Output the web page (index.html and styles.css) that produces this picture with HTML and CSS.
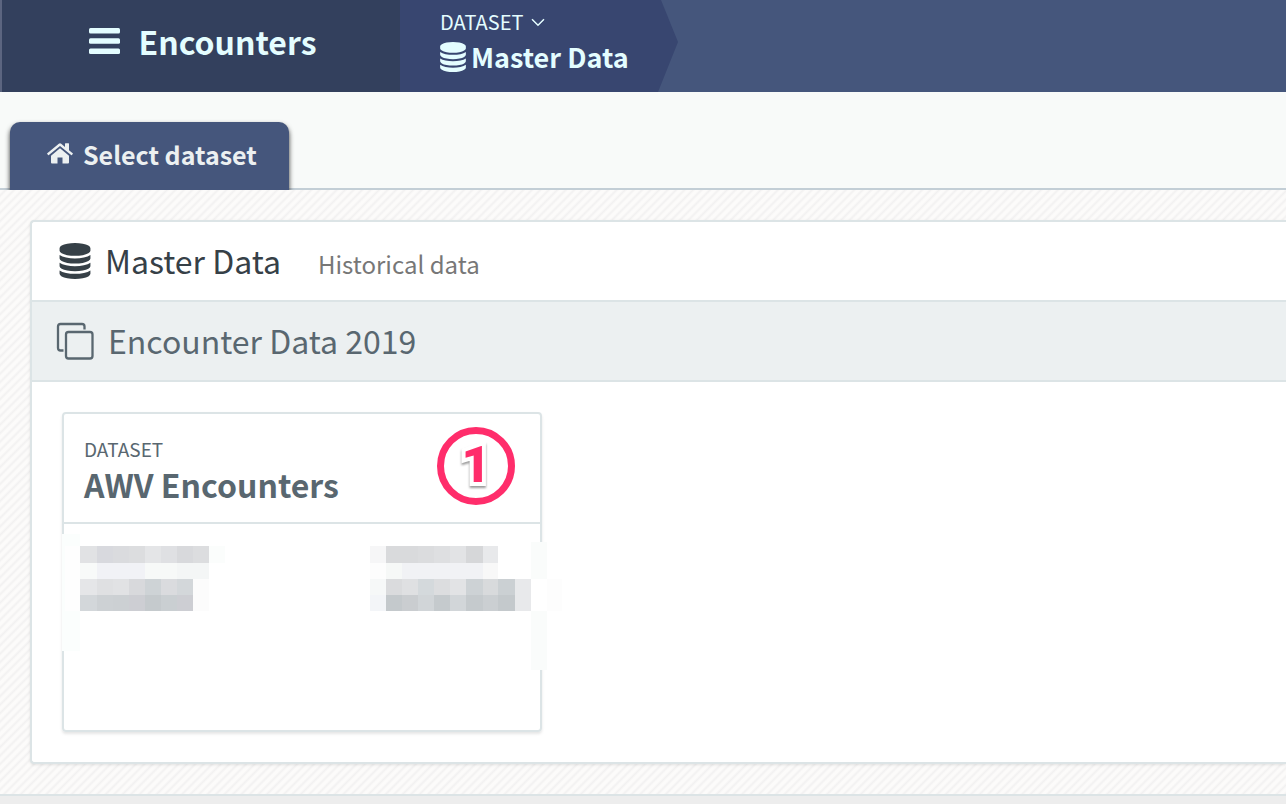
FILE: index.html
```
<!DOCTYPE html>
<html lang="en">
<head>
    <meta charset="UTF-8">
    <meta name="viewport" content="width=device-width, initial-scale=1.0">
    <title>Encounters</title>
    <link rel="stylesheet" href="styles.css">
</head>
<body>
    <svg class="symbols" aria-hidden="true">
        <symbol id="database" viewBox="0 0 1536 1792">
            <path d="M768 768q237 0 443-43t325-127v170q0 69-103 128t-280 93.500-385 34.500-385-34.500-280-93.500-103-128v-170q119 84 325 127t443 43zm0 768q237 0 443-43t325-127v170q0 69-103 128t-280 93.500-385 34.500-385-34.500-280-93.500-103-128v-170q119 84 325 127t443 43zm0-384q237 0 443-43t325-127v170q0 69-103 128t-280 93.500-385 34.500-385-34.500-280-93.500-103-128v-170q119 84 325 127t443 43zm0-1152q208 0 385 34.500t280 93.500 103 128v128q0 69-103 128t-280 93.500-385 34.500-385-34.500-280-93.500-103-128v-128q0-69 103-128t280-93.500 385-34.500z"/>
        </symbol>
    </svg>

    <header class="navbar">
        <button type="button" class="menu-button">
            <svg class="menu-icon" viewBox="0 0 32 26" aria-hidden="true">
                <rect x="0" y="0" width="31" height="5.500" rx="1.500"/>
                <rect x="0" y="10.200" width="31" height="5.500" rx="1.500"/>
                <rect x="0" y="20.500" width="31" height="5.500" rx="1.500"/>
            </svg>
            Encounters
        </button>
        <button type="button" class="crumb">
            <span class="crumb-label">DATASET
                <svg class="chevron" viewBox="0 0 14 9" aria-hidden="true"><path d="M1 1.200 7 7.200l6-6"/></svg>
            </span>
            <span class="crumb-name">
                <svg class="crumb-icon" aria-hidden="true"><use href="#database"/></svg>
                Master Data
            </span>
        </button>
    </header>

    <nav class="tabs">
        <a class="tab" href="#datasets">
            <svg class="home-icon" viewBox="0 0 26 21" aria-hidden="true">
                <path d="M13 5.300 22 12.800V19.500q0 1-1 1H15.500V14.500H10.500V20.500H5q-1 0-1-1V12.800z"/>
                <path d="M.300 10.300 11.800.700q1.200-.9 2.400 0L18 3.900V.8q0-.5.500-.5H21.500q.5 0 .5.500V7.200L25.700 10.300q.4.400 0 .8L24.900 12q-.4.400-.8.100L13 2.900 1.900 12.100q-.4.300-.8-.1L.3 11.100q-.4-.4 0-.8z"/>
            </svg>
            Select dataset
        </a>
    </nav>

    <main class="content" id="datasets">
        <section class="panel">
            <div class="panel-header">
                <svg class="panel-icon" aria-hidden="true"><use href="#database"/></svg>
                <h1>Master Data</h1>
                <span class="subtitle">Historical data</span>
            </div>
            <div class="panel-group">
                <svg class="copy-icon" viewBox="0 0 38 38" aria-hidden="true">
                    <path d="M7.500 28.500H4.500Q2 28.500 2 26V4.500Q2 2 4.500 2H26Q28.500 2 28.500 4.500V7.500"/>
                    <rect x="10" y="10" width="26.500" height="26.500" rx="2.500"/>
                </svg>
                <h2>Encounter Data 2019</h2>
            </div>
            <div class="panel-body">
                <a class="card" href="#awv">
                    <div class="card-header">
                        <div>
                            <div class="card-label">DATASET</div>
                            <div class="card-name">AWV Encounters</div>
                        </div>
                        <div class="step"><span class="step-number">1</span></div>
                    </div>
                    <div class="card-body"></div>
                    <!-- pixelated private details, runs over the card edges -->
                    <svg class="mosaic" viewBox="62 534 500 136" shape-rendering="crispEdges" aria-hidden="true">
                        <rect x="62" y="534" width="18" height="117" fill="#fbfefd"/>
                        <rect x="65" y="546" width="15" height="65" fill="#fefefe"/>
                        <rect x="531" y="542" width="16" height="128" fill="#fafcfb"/>
                        <rect x="531" y="579" width="16" height="32" fill="#fff"/>
                        <rect x="547" y="579" width="15" height="32" fill="#fdfdfd"/>

                        <rect x="80" y="546" width="17" height="17" fill="#e1e2e4"/>
                        <rect x="97" y="546" width="16" height="17" fill="#d8d9de"/>
                        <rect x="113" y="546" width="16" height="17" fill="#dadbde"/>
                        <rect x="129" y="546" width="16" height="17" fill="#dcdddf"/>
                        <rect x="145" y="546" width="16" height="17" fill="#e4e5e7"/>
                        <rect x="161" y="546" width="16" height="17" fill="#dfe0e3"/>
                        <rect x="177" y="546" width="16" height="17" fill="#d8d9dc"/>
                        <rect x="193" y="546" width="16" height="17" fill="#dcdddf"/>
                        <rect x="209" y="546" width="16" height="17" fill="#fbfdfc"/>
                        <rect x="80" y="563" width="17" height="16" fill="#f8faf9"/>
                        <rect x="97" y="563" width="48" height="16" fill="#f1f2f6"/>
                        <rect x="145" y="563" width="32" height="16" fill="#f7f9f8"/>
                        <rect x="177" y="563" width="32" height="16" fill="#f4f6f6"/>
                        <rect x="80" y="579" width="17" height="16" fill="#e5e6e8"/>
                        <rect x="97" y="579" width="16" height="16" fill="#dfe0e2"/>
                        <rect x="113" y="579" width="16" height="16" fill="#e1e2e4"/>
                        <rect x="129" y="579" width="16" height="16" fill="#d8d9dc"/>
                        <rect x="145" y="579" width="16" height="16" fill="#ced3d6"/>
                        <rect x="161" y="579" width="16" height="16" fill="#dadbde"/>
                        <rect x="177" y="579" width="16" height="16" fill="#d3d7da"/>
                        <rect x="193" y="579" width="16" height="32" fill="#fcfcfc"/>
                        <rect x="80" y="595" width="17" height="16" fill="#d3d7da"/>
                        <rect x="97" y="595" width="16" height="16" fill="#cdd1d4"/>
                        <rect x="113" y="595" width="16" height="16" fill="#ccd0d3"/>
                        <rect x="129" y="595" width="16" height="16" fill="#cdced3"/>
                        <rect x="145" y="595" width="16" height="16" fill="#c5cacd"/>
                        <rect x="161" y="595" width="16" height="16" fill="#cacfd2"/>
                        <rect x="177" y="595" width="16" height="16" fill="#cdced3"/>

                        <rect x="370" y="546" width="16" height="17" fill="#f6f6f7"/>
                        <rect x="386" y="546" width="32" height="17" fill="#d9dadc"/>
                        <rect x="418" y="546" width="16" height="17" fill="#dbdcde"/>
                        <rect x="434" y="546" width="16" height="17" fill="#dedfe1"/>
                        <rect x="450" y="546" width="16" height="17" fill="#e2e3e5"/>
                        <rect x="466" y="546" width="17" height="17" fill="#d6d7d9"/>
                        <rect x="483" y="546" width="15" height="17" fill="#e8e9eb"/>
                        <rect x="370" y="563" width="16" height="16" fill="#fdfdfd"/>
                        <rect x="386" y="563" width="16" height="16" fill="#f6f8f7"/>
                        <rect x="402" y="563" width="81" height="16" fill="#f1f2f5"/>
                        <rect x="483" y="563" width="15" height="16" fill="#f8f8f8"/>
                        <rect x="370" y="579" width="16" height="16" fill="#f6f8f8"/>
                        <rect x="386" y="579" width="16" height="16" fill="#dadbdd"/>
                        <rect x="402" y="579" width="16" height="16" fill="#dfe0e2"/>
                        <rect x="418" y="579" width="16" height="16" fill="#d4d9dc"/>
                        <rect x="434" y="579" width="16" height="16" fill="#dcdddf"/>
                        <rect x="450" y="579" width="16" height="16" fill="#e2e3e5"/>
                        <rect x="466" y="579" width="17" height="16" fill="#cdd2d5"/>
                        <rect x="483" y="579" width="15" height="16" fill="#d8dadc"/>
                        <rect x="498" y="579" width="17" height="16" fill="#cbd0d3"/>
                        <rect x="515" y="579" width="16" height="32" fill="#e8e9eb"/>
                        <rect x="370" y="595" width="16" height="16" fill="#f3f5f8"/>
                        <rect x="386" y="595" width="16" height="16" fill="#c4c9cc"/>
                        <rect x="402" y="595" width="16" height="16" fill="#cacdd0"/>
                        <rect x="418" y="595" width="16" height="16" fill="#d1d5d8"/>
                        <rect x="434" y="595" width="16" height="16" fill="#c5cacd"/>
                        <rect x="450" y="595" width="16" height="16" fill="#d2d6d9"/>
                        <rect x="466" y="595" width="17" height="16" fill="#c5cacd"/>
                        <rect x="483" y="595" width="15" height="16" fill="#cbcfd2"/>
                        <rect x="498" y="595" width="17" height="16" fill="#c4c9cc"/>
                    </svg>
                </a>
            </div>
        </section>
    </main>

    <footer class="footer"></footer>
</body>
</html>
```
FILE: styles.css
```
* {
    margin: 0;
    padding: 0;
    box-sizing: border-box;
}

body {
    font-family: 'Source Sans Pro', 'Noto Sans CJK SC', sans-serif;
    background: #f8faf9;
    color: #596770;
    display: flex;
    flex-direction: column;
    min-height: 100vh;
    overflow-x: hidden;
}

button {
    border: none;
    background: none;
    color: inherit;
    font-family: inherit;
    cursor: pointer;
}

a {
    color: inherit;
    text-decoration: none;
}

.symbols {
    display: none;
}

svg {
    fill: currentColor;
    flex-shrink: 0;
}

/* top bar */
.navbar {
    display: flex;
    height: 92px;
    background: #45567c;
    color: #e4fdff;
}

.menu-button {
    display: flex;
    justify-content: center;
    align-items: center;
    gap: 17px;
    width: 400px;
    padding: 0 0 10px 4px;
    background: #33405d;
    border-left: 2px solid #5c6580;
    font-size: 32px;
    font-weight: 700;
    line-height: 40px;
}

.menu-icon {
    width: 32px;
    height: 26px;
}

.crumb {
    display: flex;
    flex-direction: column;
    justify-content: flex-start;
    width: 278px;
    padding: 8px 40px 0;
    background: #384670;
    clip-path: polygon(0 0, 261px 0, 100% 42px, 258px 100%, 0 100%);
    text-align: left;
}

.crumb-label {
    display: flex;
    align-items: center;
    gap: 8px;
    font-size: 20px;
    line-height: 28px;
}

.chevron {
    width: 14px;
    height: 9px;
    fill: none;
    stroke: currentColor;
    stroke-width: 1.5;
}

.crumb-name {
    display: flex;
    align-items: center;
    gap: 5px;
    font-size: 27px;
    font-weight: 700;
    line-height: 42px;
    white-space: nowrap;
}

.crumb-icon {
    width: 26px;
    height: 30px;
}

/* tabs */
.tabs {
    display: flex;
    padding: 30px 10px 0;
    border-bottom: 2px solid #c3ced6;
}

.tab {
    display: flex;
    align-items: center;
    gap: 10px;
    height: 68px;
    margin-bottom: -2px;
    padding: 0 32px 5px 37px;
    background: #45567c;
    border-radius: 10px 10px 0 0;
    box-shadow: 0 3px 5px rgba(0, 0, 0, 0.8);
    clip-path: inset(-8px -8px 0 -8px);
    color: #ecf0f1;
    font-size: 25px;
    font-weight: 700;
}

.home-icon {
    width: 26px;
    height: 21px;
}

/* dataset list */
.content {
    padding: 30px 0 30px 30px;
    background: repeating-linear-gradient(135deg, #fcfbfa 0, #fcfbfa 2px, #f2f1f1 4px, #fcfbfa 6px);
}

.panel {
    background: #fff;
    border: 2px solid #dce4e6;
    border-right: none;
    border-radius: 4px 0 0 4px;
    box-shadow: 0 1px 3px rgba(0, 0, 0, 0.1);
}

.panel-header,
.panel-group {
    display: flex;
    align-items: center;
    height: 80px;
    border-bottom: 2px solid #dce4e6;
}

.panel-header {
    padding-left: 27px;
    color: #364047;
}

.panel-group {
    gap: 14px;
    padding-left: 24px;
    background: #ecf0f1;
}

.panel-icon {
    width: 32px;
    height: 36px;
    margin-right: 14px;
}

h1,
h2 {
    padding-bottom: 2px;
    font-size: 32px;
    font-weight: 400;
    line-height: 40px;
}

.subtitle {
    margin: 6px 0 0 37px;
    color: #777;
    font-size: 24px;
    line-height: 32px;
}

.copy-icon {
    width: 38px;
    height: 38px;
    fill: none;
    stroke: currentColor;
    stroke-width: 2.3;
}

.panel-body {
    padding: 30px;
}

.card {
    display: block;
    position: relative;
    width: 480px;
    border: 2px solid #dce4e6;
    border-radius: 4px;
    box-shadow: 0 2px 3px rgba(0, 0, 0, 0.1);
}

.card-header {
    display: flex;
    justify-content: space-between;
    align-items: flex-start;
    height: 110px;
    padding: 13px 25px 0 20px;
    border-bottom: 2px solid #dce4e6;
}

.card-label {
    padding-top: 8px;
    font-size: 19px;
    line-height: 28px;
}

.card-name {
    font-size: 32px;
    font-weight: 700;
    line-height: 42px;
}

.step {
    width: 78px;
    height: 78px;
    border: 7px solid #ff2d6b;
    border-radius: 50%;
    color: #ff2d6b;
    font-family: Roboto, sans-serif;
    font-size: 50px;
    font-weight: 900;
    line-height: 62px;
    text-align: center;
}

.step-number {
    -webkit-text-stroke: 8px #fff;
    paint-order: stroke fill;
    stroke-linejoin: round;
    filter: drop-shadow(0 2px 1px rgba(0, 0, 0, 0.4));
}

.card-body {
    height: 206px;
}

.mosaic {
    position: absolute;
    top: 120px;
    left: -2px;
    width: 500px;
    height: 136px;
}

.footer {
    flex: 1;
    border-top: 2px solid #dce4e6;
    background: #ededed;
}
```
